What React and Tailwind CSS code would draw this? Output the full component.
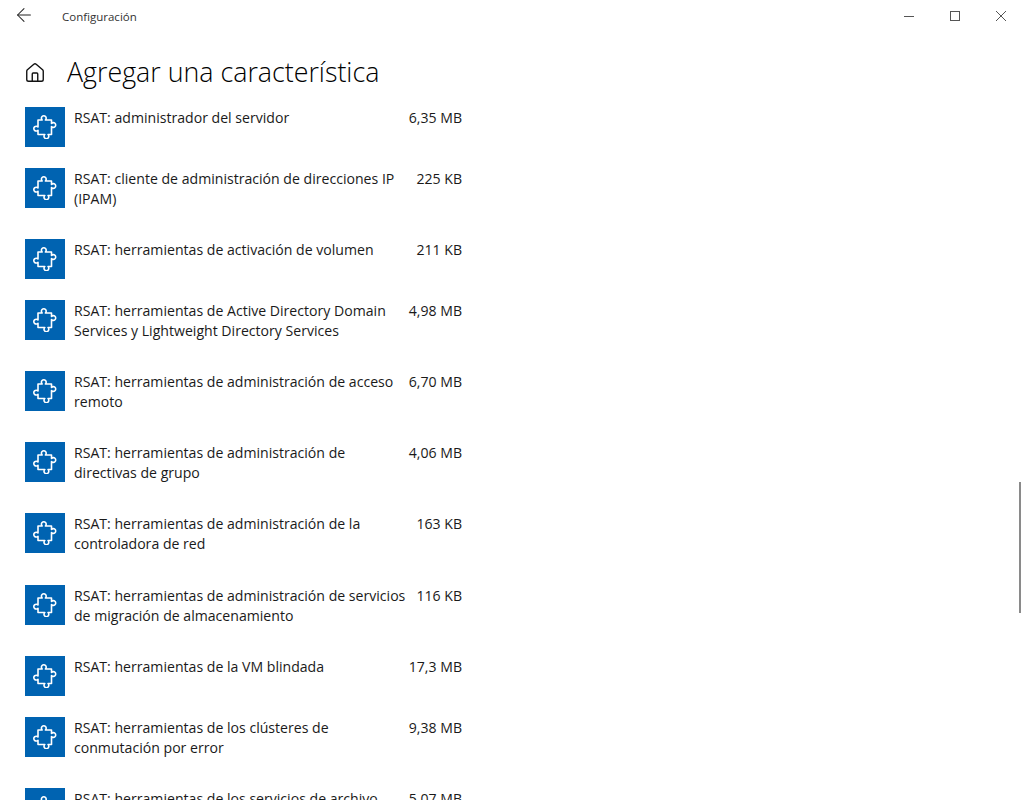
import { ArrowLeft, Home } from "lucide-react";

const features = [
  { name: ["RSAT: administrador del servidor"], size: "6,35 MB" },
  { name: ["RSAT: cliente de administración de direcciones IP", "(IPAM)"], size: "225 KB" },
  { name: ["RSAT: herramientas de activación de volumen"], size: "211 KB" },
  { name: ["RSAT: herramientas de Active Directory Domain", "Services y Lightweight Directory Services"], size: "4,98 MB" },
  { name: ["RSAT: herramientas de administración de acceso", "remoto"], size: "6,70 MB" },
  { name: ["RSAT: herramientas de administración de", "directivas de grupo"], size: "4,06 MB" },
  { name: ["RSAT: herramientas de administración de la", "controladora de red"], size: "163 KB" },
  { name: ["RSAT: herramientas de administración de servicios", "de migración de almacenamiento"], size: "116 KB" },
  { name: ["RSAT: herramientas de la VM blindada"], size: "17,3 MB" },
  { name: ["RSAT: herramientas de los clústeres de", "conmutación por error"], size: "9,38 MB" },
  { name: ["RSAT: herramientas de los servicios de archivo"], size: "5,07 MB" },
];

const PuzzleIcon = () => (
  <svg width="24" height="24" viewBox="0 0 24 24" fill="none" stroke="white" strokeWidth="1.6" strokeLinejoin="round">
    <path d="M5 5h4.200a2.400 2.400 0 1 1 3.200 0h6.100v3.400a2.400 2.400 0 1 1 0 3.200v7.900H15a2.400 2.400 0 1 1-3.200 0H5v-4.300a2.400 2.400 0 1 1 0-3.200z" />
  </svg>
);

const App = () => {
  return (
    <div className="w-[1024px] h-[800px] overflow-hidden bg-white text-[#1a1a1a] relative font-['Open_Sans','Noto_Sans',sans-serif]">
      <div className="h-[32px] flex items-center">
        <div className="w-[48px] flex justify-center -mt-[2px]">
          <ArrowLeft size={22} strokeWidth={1.1} className="text-[#222]" />
        </div>
        <span className="ml-[14px] text-[11.500px] text-[#333] mt-px">Configuración</span>
        <div className="ml-auto flex">
          <div className="w-[46px] h-[32px] flex items-center justify-center">
            <div className="w-[10px] h-px bg-[#555]" />
          </div>
          <div className="w-[46px] h-[32px] flex items-center justify-center">
            <div className="w-[10px] h-[10px] border border-[#555]" />
          </div>
          <div className="w-[46px] h-[32px] flex items-center justify-center">
            <svg width="10" height="10" viewBox="0 0 10 10" stroke="#555" strokeWidth="1">
              <path d="M0 0l10 10M10 0L0 10" />
            </svg>
          </div>
        </div>
      </div>

      <div className="h-[75px] flex items-start pt-[22px] pl-[24px]">
        <Home size={22} strokeWidth={1.5} className="mt-[8px] text-[#111]" />
        <h1 className="ml-[21px] text-[26.800px] leading-[36px] font-light text-black">Agregar una característica</h1>
      </div>

      <div className="pl-[25px] w-[462px]">
        {features.map((f) => (
          <div key={f.name[0]} className={`flex ${f.name.length > 1 ? "h-[71.080px]" : "h-[61.080px]"}`}>
            <div className="w-[40px] h-[40px] bg-[#0063b1] flex items-center justify-center shrink-0">
              <PuzzleIcon />
            </div>
            <div className="ml-[9px] pt-px text-[14.100px] leading-[20px] whitespace-nowrap">
              {f.name.map((line) => (
                <div key={line}>{line}</div>
              ))}
            </div>
            <div className="ml-auto pt-px text-[14.100px] leading-[20px] whitespace-nowrap">{f.size}</div>
          </div>
        ))}
      </div>

      <div className="absolute right-[3px] top-[482px] w-[2px] h-[131px] bg-[#8a8a8a]" />
    </div>
  );
};

export default App;
